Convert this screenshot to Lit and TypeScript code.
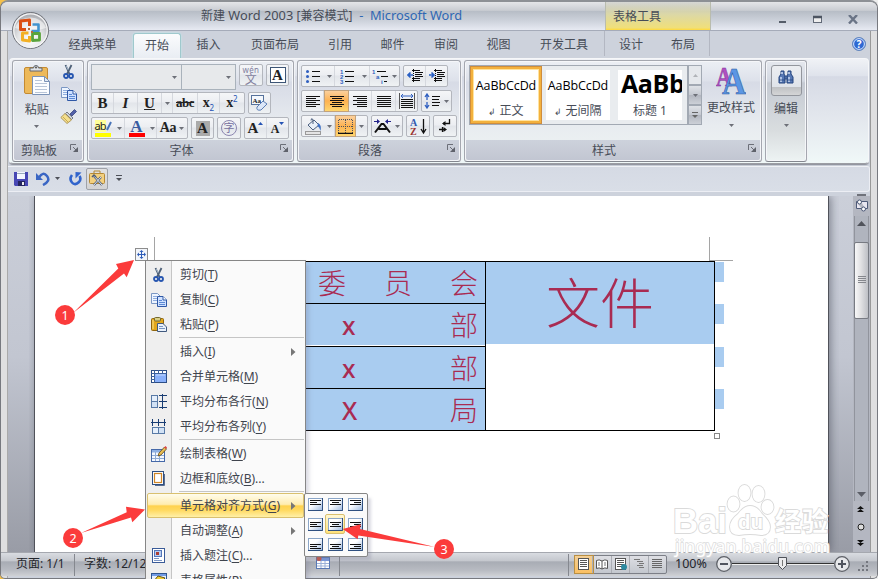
import { LitElement, html, svg, css, nothing } from "lit";
import { customElement } from "lit/decorators.js";
import { classMap } from "lit/directives/class-map.js";
import { styleMap } from "lit/directives/style-map.js";

const icon = (w: number, h: number, body: unknown) =>
  html`<svg width=${w} height=${h} viewBox="0 0 ${w} ${h}">${body}</svg>`;

/* Horizontal strokes: [x, y, length] */
const bars = (rows: number[][], fill = "#111") =>
  rows.map(([x, y, l]) => svg`<rect x=${x} y=${y} width=${l} height="1" fill=${fill}/>`);

const drop = html`<svg class="drop" width="5" height="3" viewBox="0 0 5 3"><path d="M0 0h5L2.500 3z" fill="#6d7078"/></svg>`;
const launcher = icon(9, 9, svg`<path d="M.5 6V.5H6" fill="none" stroke="#6c6f78"/><path d="M3 3l3 3" stroke="#6c6f78"/><path d="M8 3v5H3z" fill="#5f626b"/>`);

const scissors = icon(16, 16, svg`<path d="M4.500 1l4 9M10.500 1L6 10" stroke="#4e6077" stroke-width="1.800"/><path d="M5.200 2l2 4" stroke="#b8cbe0" stroke-width=".8"/><circle cx="5" cy="12" r="2" fill="none" stroke="#2756b0" stroke-width="1.800"/><circle cx="10" cy="12" r="2" fill="none" stroke="#2756b0" stroke-width="1.800"/>`);
const copy = icon(16, 14, svg`<path d="M.5.5h6l3 3v7h-9z" fill="#eef5ff" stroke="#7b97c4"/><path d="M2 3.500h4M2 5.500h5M2 7.500h5" stroke="#8fadde"/><path d="M6.500 3.500h5.500l3.500 3.500v6.500h-9z" fill="#cfe1ff" stroke="#2f58a6"/><path d="M12 3.500v3.500h3.500" fill="#fff" stroke="#2f58a6"/><path d="M8 7.500h3M8 9.500h6M8 11.500h6" stroke="#5d8ad4"/>`);
const pasteSmall = icon(16, 15, svg`<rect x=".5" y="1.500" width="12" height="12" rx="1" fill="#e3a81d" stroke="#90660e"/><path d="M2 3v9" stroke="#ffe58a"/><rect x="3.500" y=".5" width="6" height="3.500" rx="1" fill="#d9cf86" stroke="#756a30"/><path d="M6.500 6.500h5.500l3.500 3.500v4.500h-9z" fill="#e9f1fb" stroke="#40597e"/><path d="M8 9.500h4M8 11.500h6" stroke="#7795c2"/>`);
const pasteBig = icon(28, 32, svg`<rect x="1.500" y="3.500" width="23" height="26" rx="1.500" fill="#edb95a" stroke="#c48a32"/><path d="M7 7V4h3.500a2.500 2.500 0 0 1 5 0H19v3z" fill="#dfe2e6" stroke="#62676f"/><circle cx="13" cy="3.400" r="1" fill="#555"/><path d="M9.500 12.500h12l5 5v13h-17z" fill="#fbfdff" stroke="#7b93b7"/><path d="M21.500 12.500v5h5z" fill="#e1eaf5" stroke="#7b93b7"/><path d="M12 16.500h7M12 19.500h12M12 22.500h12M12 25.500h12M12 28.500h12" stroke="#b8c5d8"/>`);
const brush = icon(17, 16, svg`<path d="M10 6l4.500-4.500 2 2L12 8z" fill="#5160a8" stroke="#39437e" stroke-width=".8"/><path d="M7 4l6 6-1.500 1.500-6-6z" fill="#cdd2dc" stroke="#5e6370" stroke-width=".8"/><path d="M5 5.500l6.500 6.500-4.500 3.500L.8 9.500z" fill="#f4df8e" stroke="#a08544" stroke-width=".8"/><path d="M3 9l5 5" stroke="#c9a94f"/>`);

const mergeIco = icon(16, 13, svg`<rect x=".5" y=".5" width="15" height="12" fill="#fff" stroke="#2d4e86"/><path d="M.5 3.500h15M3.500.5v12M7.500 0v3.500M11.500 0v3.500M0 6.500h3.500M0 9.500h3.500" stroke="#3c609c"/><rect x="4" y="4" width="11" height="8" fill="#89b0fa"/><path d="M5 5h9" stroke="#c3d8ff"/>`);
const distRows = icon(16, 15, svg`<rect x=".5" y="1.500" width="6" height="6" fill="#e5effb" stroke="#587aa6"/><rect x=".5" y="7.500" width="6" height="6" fill="#d2e2f5" stroke="#587aa6"/><path d="M8 1.500h8M8 7.500h8M8 13.500h8M11.500 0v15" stroke="#193d73"/>`);
const distCols = icon(15, 16, svg`<path d="M0 3.500h15M1.500 0v7M7.500 0v7M13.500 0v7" stroke="#193d73"/><rect x="1.500" y="8.500" width="6" height="6" fill="#e5effb" stroke="#587aa6"/><rect x="7.500" y="8.500" width="6" height="6" fill="#d2e2f5" stroke="#587aa6"/>`);
const drawTable = icon(16, 16, svg`<rect x=".5" y="3.500" width="13" height="12" fill="#f4f8ff" stroke="#4468a8"/><rect x="1" y="4" width="12" height="2.500" fill="#8eb0e4"/><path d="M4.500 6v9M8.500 6v9M1 9.500h12M1 12.500h12" stroke="#8fabd5"/><path d="M7 10l1-3 5.500-6 2 2L10 9z" fill="#e9bd51" stroke="#5e471c" stroke-width=".8"/><path d="M13 1.500L14.500 0 16 1.500 15 3z" fill="#d44"/>`);
const borderPage = icon(14, 15, svg`<path d="M12.500 3v11.500H3" fill="none" stroke="#5a6e90"/><rect x=".5" y=".5" width="11" height="13" fill="#fff" stroke="#2d4f82"/><rect x="2.500" y="2.500" width="7" height="9" fill="#fff" stroke="#d08728" stroke-width="1.200"/>`);
const caption = icon(14, 15, svg`<rect x=".5" y=".5" width="12" height="14" fill="#fff" stroke="#3a5b98"/><rect x="2.500" y="2.500" width="7" height="6" fill="#b7cdf3" stroke="#5577b8"/><rect x="4" y="4" width="3" height="3" fill="#ab3d32"/><path d="M2 10.500h5M2 12.500h8" stroke="#7b94c4"/>`);
const tableProps = icon(16, 16, svg`<rect x=".5" y=".5" width="15" height="15" fill="#e8f0fd" stroke="#31568f"/><path d="M1 2h14" stroke="#719be6" stroke-width="2"/><path d="M2 9l5-6 7 2-5 6z" fill="#f2ce32" stroke="#5f5215"/>`);

interface MenuItem { label: string; key: string; tail?: string; ico?: unknown; sub?: boolean; hot?: boolean; sep?: boolean; }
const MENU: MenuItem[] = [
  { label: "剪切", key: "T", ico: scissors },
  { label: "复制", key: "C", ico: copy },
  { label: "粘贴", key: "P", ico: pasteSmall, sep: true },
  { label: "插入", key: "I", sub: true },
  { label: "合并单元格", key: "M", ico: mergeIco },
  { label: "平均分布各行", key: "N", ico: distRows },
  { label: "平均分布各列", key: "Y", ico: distCols, sep: true },
  { label: "绘制表格", key: "W", ico: drawTable },
  { label: "边框和底纹", key: "B", tail: "...", ico: borderPage, sep: true },
  { label: "单元格对齐方式", key: "G", sub: true, hot: true },
  { label: "自动调整", key: "A", sub: true },
  { label: "插入题注", key: "C", tail: "...", ico: caption },
  { label: "表格属性", key: "R", tail: "...", ico: tableProps },
];

@customElement("cell-menu")
export class CellMenu extends LitElement {
  static styles = css`
    :host { display: block; font: 12px "Noto Sans", "Noto Sans CJK SC", sans-serif; color: #3f444d; }
    .menu { box-sizing: border-box; width: 161px; height: 330px; border: 1px solid #868686; padding-top: 1px;
      background: linear-gradient(90deg, #efefef 25px, #c5c5c5 25px 26px, #fafafa 26px); box-shadow: 4px 3px 4px -1px #70709040; overflow: hidden; }
    .item { display: flex; align-items: center; height: 25px; margin: 0 1px; box-sizing: border-box; position: relative; }
    .ico { width: 23px; display: flex; justify-content: center; margin-right: 10px; }
    .lab { line-height: 24px; white-space: nowrap; flex: 1; }
    u { text-underline-offset: 2px; }
    .arr { margin-right: 8px; }
    .hot { border: 1px solid #d9c06f; border-radius: 2px; background: linear-gradient(#fffcec, #ffedb0 45%, #ffd24e 52%, #ffd960 70%, #fff0a8); margin-right: 1px; }
    .hot .ico { width: 22px; }
    .hot .arr { margin-right: 7px; }
    .sep { height: 1px; margin: 0 1px 1px 33px; background: #c5c5c5; }
  `;
  render() {
    return html`<div class="menu">${MENU.map(
      (m) => html`<div class=${classMap({ item: true, hot: !!m.hot })}>
          <span class="ico">${m.ico ?? nothing}</span>
          <span class="lab">${m.label}(<u>${m.key}</u>)${m.tail ?? ""}</span>
          ${m.sub ? html`<svg class="arr" width="5" height="8" viewBox="0 0 5 8"><path d="M0 0l4.500 4L0 8z" fill="#777"/></svg>` : nothing}
        </div>${m.sep ? html`<div class="sep"></div>` : nothing}`)}</div>`;
  }
}

@customElement("align-grid")
export class AlignGrid extends LitElement {
  static styles = css`
    :host { display: grid; box-sizing: border-box; width: 64px; height: 64px; border: 1px solid #868686; border-radius: 2px; background: #fafafa;
      grid-template: repeat(3, 20px) / repeat(3, 20px); padding: 0; box-shadow: 4px 4px 3px -1px #70709040; }
    .c { box-sizing: border-box; display: flex; align-items: flex-start; padding: 4px 0 0 3px; }
    .on { border: 1px solid #d9c06f; border-radius: 2px; background: linear-gradient(#fff8d6, #ffe27a); padding: 3px 0 0 2px; }
    svg { display: block; }
  `;
  render() {
    const cells = [];
    for (let r = 0; r < 3; r++)
      for (let c = 0; c < 3; c++) {
        const y = 2 + r * 2;
        const at = (l: number) => (c === 0 ? 2 : c === 1 ? 7.5 - l / 2 : 13 - l);
        cells.push(html`<div class=${classMap({ c: true, on: r === 1 && c === 1 })}>${icon(15, 13, svg`
          <defs><linearGradient id="g" x1="0" y1="0" x2="1" y2="1"><stop offset=".4" stop-color="#fff"/><stop offset="1" stop-color="#9db9df"/></linearGradient></defs>
          <rect x=".5" y=".5" width="14" height="12" fill="url(#g)" stroke="#8ba6c8"/><path d="M0 12.500h14.500V0" fill="none" stroke="#2f5080"/>
          ${bars([[at(11), y, 11], [at(7), y + 2, 7], [at(11), y + 4, 11]].map(([a, b, l]) => [Math.round(a), b, l]))}`)}</div>`);
      }
    return html`${cells}`;
  }
}

@customElement("ribbon-bar")
export class RibbonBar extends LitElement {
  static styles = css`
    :host { display: block; height: 106px; box-sizing: border-box; margin: 0 1px; border: 1px solid #f6f7f9; border-bottom-color: #9b9da4; border-radius: 4px;
      background: linear-gradient(#f0f2f6, #dfe3ec 16%, #d6dae5 17%, #e4e8ee 60%, #f0f8f8); box-shadow: 0 1px 1px #8d9099;
      font: 12px "Noto Sans", "Noto Sans CJK SC", sans-serif; color: #474c57; padding: 1px 0 0 2px; }
    svg { flex: none; }
    .row0 { display: flex; gap: 3px; }
    .g { box-sizing: border-box; height: 102px; border: 1px solid #a4a7af; border-bottom-color: #83868e; border-radius: 3px; box-shadow: inset 0 0 0 1px #f5f6f9, 1px 0 #f2f3f6;
      background: linear-gradient(#eceff4, #dde1ea 20%, #d7dbe6 21%, #e8ecf0 65%, #eef4f3); display: flex; flex-direction: column; }
    .body { flex: 1; padding: 3px 3px 0; display: flex; flex-direction: column; gap: 3px; }
    .para .body { padding-top: 4px; }
    .foot { height: 20px; margin: 0 1px 1px; display: flex; align-items: center; background: linear-gradient(#cdd2dc, #c2c6d2); border-radius: 0 0 2px 2px; }
    .foot b { font-weight: 400; flex: 1; text-align: center; line-height: 20px; margin-top: 2px; padding-right: 18px; }
    .foot svg { margin: -4px 3px 0 -12px; }
    .clip { width: 72px; } .font { width: 207px; } .para { width: 164px; } .style { width: 298px; } .edit { width: 42px; }
    .line { display: flex; gap: 3px; height: 22px; }
    .top { height: 25px; }
    .seg { display: flex; box-sizing: border-box; border: 1px solid #b3b6bd; border-radius: 2px; background: linear-gradient(#f5f6f8, #eceef2 45%, #e2e5ea 50%, #eff2f4); height: 22px; }
    .seg > span { display: flex; align-items: center; justify-content: center; border-right: 1px solid #d5d8de; box-sizing: border-box; }
    .seg > span:last-child { border-right: 0; }
    .seg .nb { border-right: 0; }
    .seg .on { background: linear-gradient(#fbd09d, #fdb251 50%, #ffd66e); margin: -1px 0; border: 1px solid #c2a27c; }
    .combo { box-sizing: border-box; height: 26px; border: 1px solid #a9b2bb; background: #e7e9eb; display: flex; align-items: center; justify-content: flex-end; padding-right: 4px; }
    .combo + .combo { margin-left: -3px; border-left: 0; }
    .c1 { width: 91px; } .c2 { width: 54px; }
    .serif { font-family: "Liberation Serif", serif; font-weight: 700; font-size: 15px; color: #222; line-height: 20px; }
    .u { text-decoration: underline; } .i { font-style: italic; } .s { text-decoration: line-through; font-size: 13px; letter-spacing: -.5px; }
    .aa { font-size: 14px; letter-spacing: -.3px; } .sup { font-size: 8px; color: #2453b4; margin: -9px 0 0 0; } .sub { font-size: 8px; color: #2453b4; margin: 9px 0 0 0; }
    .sa { font-size: 12px; margin-top: 2px; }
    .frame { border: 1px solid #3d5576; width: 14px; height: 14px; line-height: 14px; text-align: center; background: #fff; }
    .shade { background: #aaa; width: 14px; height: 15px; line-height: 15px; text-align: center; }
    .ring { box-sizing: border-box; border: 1px solid #8c86b0; border-radius: 50%; width: 16px; height: 16px; line-height: 14px; font-size: 11px; color: #766fa0; text-align: center; }
    .wen { flex-direction: column; font-size: 8px; line-height: 7px; color: #81809e; letter-spacing: .4px; } .wen i { font: 12px/11px "Noto Sans CJK SC"; }
    .ul { display: flex; flex-direction: column; align-items: center; } .bar { height: 4px; width: 16px; }
    .yellow { background: #ff0; } .red { background: #f00; }
    .ab { font: 11px/12px "Noto Sans", sans-serif; color: #222; background: #ff9; align-self: flex-start; letter-spacing: -1px; padding-right: 1px; }
    .hl { display: flex; align-items: flex-start; height: 13px; width: 17px; }
    .fc { font-size: 17px; line-height: 14px; color: #3a5ca0; height: 13px; }
    .clipin { display: flex; flex: 1; padding: 3px 3px 0; }
    .big { width: 42px; display: flex; flex-direction: column; align-items: center; }
    .big b, .col b { font-weight: 400; line-height: 16px; white-space: nowrap; }
    .big b { margin-top: 6px; }
    .big .drop { margin-top: 7px; }
    .tools { display: flex; flex-direction: column; align-items: center; gap: 7px; width: 23px; }
    .stin { display: flex; flex: 1; padding: 4px 0 0 4px; }
    .gal { display: flex; width: 219px; height: 60px; box-sizing: border-box; border: 1px solid #a2a9b3; background: #e9ecef; }
    .sty { width: 64px; height: 50px; margin: 4px 4px; background: #fff; display: flex; flex-direction: column; align-items: center; overflow: hidden; }
    .sty em { font: 12.500px/31px "Open Sans", sans-serif; color: #000; letter-spacing: -.1px; white-space: nowrap; }
    .sty .h { font: 700 25px/27px "Open Sans", sans-serif; height: 31px; letter-spacing: -.4px; align-self: flex-start; margin-left: 3px; }
    .sty p { margin: 0; line-height: 19px; white-space: nowrap; }
    .sty small { font-size: 9px; }
    .sel { box-shadow: 0 0 0 1px #ffe3a0, 0 0 0 3px #f3b13d, 0 0 0 4px #cf8d3c; }
    .spin { display: flex; flex-direction: column; width: 14px; height: 60px; }
    .spin span { flex: 1; border: 1px solid #a2a9b3; box-sizing: border-box; display: flex; align-items: center; justify-content: center; background: linear-gradient(#dfe2e7, #c4c8d0 50%, #b2b6bf 51%, #ccd0d7); }
    .spin .off { background: #e5e8ec; }
    .col { display: flex; flex-direction: column; align-items: center; width: 58px; }
    .col svg { margin-top: 1px; } .col .drop { margin-top: 8px; } .col b { margin-top: 5px; }
    .edit { align-items: center; background: linear-gradient(#e5e8ee, #d3d8e2 20%, #c5cad3 22%, #d9dddf 70%, #edf3f3); }
    .ebtn { margin-top: 4px; width: 31px; height: 31px; box-sizing: border-box; border: 1px solid #93969d; border-radius: 3px; display: flex; justify-content: center; padding-top: 4px; background: linear-gradient(#eceef1, #dfe3ea 72%, #bfc1c4 73%, #d4d5d6); }
    .edit b { font-weight: 400; line-height: 16px; margin-top: 5px; } .edit .drop { margin-top: 7px; }
  `;

  private cell(w: number, body: unknown, cls = "") {
    return html`<span class=${cls} style=${styleMap({ width: `${w}px` })}>${body}</span>`;
  }

  private clipboard() {
    return html`<div class="g clip"><div class="clipin">
        <div class="big">${pasteBig}<b>粘贴</b>${drop}</div>
        <div class="tools">${scissors}${copy}${brush}</div>
      </div><div class="foot"><b>剪贴板</b>${launcher}</div></div>`;
  }

  private font() {
    const c = this.cell;
    return html`<div class="g font"><div class="body">
      <div class="line top">
        <div class="combo c1">${drop}</div><div class="combo c2">${drop}</div>
        <div class="seg">${c(22, html`wén<i>文</i>`, "wen")}</div>
        <div class="seg">${c(21, html`<div class="serif frame">A</div>`)}</div>
      </div>
      <div class="line">
        <div class="seg">
          ${c(22, html`<span class="serif">B</span>`)}${c(24, html`<span class="serif i">I</span>`)}
          ${c(24, html`<span class="serif u">U</span>`)}${c(11, drop)}
          ${c(25, html`<span class="serif s">abc</span>`)}
          ${c(22, html`<span class="serif aa">x</span><span class="sub">2</span>`)}${c(24, html`<span class="serif aa">x</span><span class="sup">2</span>`)}
        </div>
        <div class="seg">${c(21, icon(18, 17, svg`<rect x=".5" y=".5" width="12" height="9" fill="#f4f8fd" stroke="#56729c"/><text x="1.500" y="7.500" font-size="7" font-weight="700" font-family="Liberation Serif" fill="#222">Aa</text><path d="M6 12l6-6 4 3-6 6q-5 1-4-3z" fill="#dce7f8" stroke="#5c7eb4"/>`))}</div>
      </div>
      <div class="line">
        <div class="seg">
          ${c(22, html`<div class="ul"><div class="hl"><span class="ab">ab</span><svg width="6" height="12" viewBox="0 0 6 12"><path d="M1 10l4-8" stroke="#4773b8" stroke-width="2"/></svg></div><div class="bar yellow"></div></div>`, "nb")}${c(11, drop)}
          ${c(23, html`<div class="ul"><span class="serif fc">A</span><div class="bar red"></div></div>`, "nb")}${c(9, drop)}
          ${c(30, html`<span class="serif aa">Aa</span>&nbsp;${drop}`)}
        </div>
        <div class="seg">${c(21, html`<div class="serif shade">A</div>`)}</div>
        <div class="seg">${c(22, html`<div class="ring">字</div>`)}</div>
        <div class="seg">
          ${c(22, html`<span class="serif">A</span><svg width="5" height="12" viewBox="0 0 5 12"><path d="M0 3h5L2.500 0z" fill="#2453b4"/></svg>`)}
          ${c(21, html`<span class="serif sa">A</span><svg width="5" height="12" viewBox="0 0 5 12"><path d="M0 0h5L2.500 3z" fill="#2453b4"/></svg>`)}
        </div>
      </div>
    </div><div class="foot"><b>字体</b>${launcher}</div></div>`;
  }

  private paragraph() {
    const c = this.cell;
    const blue = "#2f5fc0";
    const al = (mode: number) =>
      icon(14, 13, bars([14, 10, 14, 10, 14, 10].map((l, i) => [mode === 3 ? 0 : mode === 0 ? 0 : mode === 1 ? (14 - l) / 2 : 14 - l, i * 2 + 1, mode === 3 ? 14 : l])));
    const indent = (d: string) => icon(16, 14, svg`${bars([[5, 1, 8], [8, 3, 8], [8, 5, 7], [8, 7, 8], [5, 9, 8], [5, 11, 8]])}<path d="M6.500 0v14" stroke="#111" stroke-dasharray="1 1"/><path d=${d} fill="none" stroke="#2a60c4" stroke-width="1.600"/>`);
    return html`<div class="g para"><div class="body">
      <div class="line">
        <div class="seg">
          ${c(22, icon(14, 13, svg`<circle cx="1.500" cy="1.500" r="1.500" fill=${blue}/><circle cx="1.500" cy="6.500" r="1.500" fill=${blue}/><circle cx="1.500" cy="11.500" r="1.500" fill=${blue}/>${bars([[6, 1, 8], [6, 6, 8], [6, 11, 8]])}`), "nb")}${c(11, drop)}
          ${c(24, icon(14, 15, svg`<g font-family="Liberation Sans" font-size="6" font-weight="700" fill=${blue}><text x="0" y="4.500">1</text><text x="0" y="9.500">2</text><text x="0" y="14.500">3</text></g>${bars([[5, 2, 9], [5, 7, 9], [5, 12, 9]])}`), "nb")}${c(11, drop)}
          ${c(19, icon(16, 15, svg`<g font-family="Liberation Sans" font-size="6" font-weight="700" fill=${blue}><text x="0" y="4.500">1</text><text x="4" y="9.500">a</text><text x="9" y="14.500">i</text></g>${bars([[5, 2, 9], [9, 7, 7], [12, 12, 3]])}`), "nb")}${c(10, drop)}
        </div>
        <div class="seg">${c(22, indent("M6 6H1M3.500 3.500L1 6l2.500 2.500"))}${c(21, indent("M0 6h5M2.500 3.500L5 6 2.500 8.500"))}</div>
      </div>
      <div class="line">
        <div class="seg">${c(22, al(0))}${c(25, al(1), "on")}${c(23, al(2))}${c(24, al(3))}${c(21, icon(16, 16, svg`<path d="M.5 0v16M15.500 0v16" stroke="#555"/><path d="M2 3h12M4 1L2 3l2 2M12 1l2 2-2 2" fill="none" stroke=${blue}/>${bars([[2, 6, 12], [2, 8, 12], [2, 10, 12], [2, 12, 12], [2, 14, 12]])}`))}</div>
        <div class="seg">${c(20, icon(16, 16, svg`<path d="M3 1v6M1 4l2-3 2 3M3 9v6M1 12l2 3 2-3" fill="none" stroke=${blue} stroke-width="1.300"/>${bars([[8, 3, 8], [8, 6, 7], [8, 9, 8], [8, 12, 7]])}`), "nb")}${c(9, drop)}</div>
      </div>
      <div class="line">
        <div class="seg">${c(22, icon(17, 17, svg`<path d="M3 7l6-5 5 5-6 5z" fill="#e9f0f8" stroke="#4b5f7e"/><path d="M8 6V1.500q-2-2-2 1" fill="none" stroke="#4b5f7e"/><path d="M13 5q4 2 2.500 8-1-4-3-5z" fill="#3d70c4"/><rect x=".5" y="13.500" width="15" height="3" fill="#e4e4e4" stroke="#999"/>`), "nb")}${c(11, drop)}${c(21, icon(15, 15, svg`<path d="M1 .5h13M1 7.500h13M.5 1v13M7.500 1v13M14.500 1v13" stroke="#4c525e" stroke-dasharray="1 1"/><path d="M0 14.500h15" stroke="#111" stroke-width="1.500"/>`), "on")}${c(11, drop)}</div>
        <div class="seg">${c(21, icon(17, 15, svg`<path d="M1 13.500L7.500 5h2L16 13.500M4.500 10h8" fill="none" stroke="#111" stroke-width="2"/><path d="M0 2.500h5M12 2.500h5" stroke="#23238a"/><path d="M3 0l3 2.500L3 5zM14 0l-3 2.500L14 5z" fill="#23238a"/>`), "nb")}${c(9, drop)}</div>
        <div class="seg">${c(22, icon(17, 17, svg`<g font-family="Liberation Serif" font-weight="700" font-size="10"><text x="0" y="7.500" fill="#3059b0">A</text><text x="0" y="16.500" fill="#9a3232">Z</text></g><path d="M13.500 1v13M11 11l2.500 4 2.500-4" fill="none" stroke="#111" stroke-width="1.300"/>`))}</div>
        <div class="seg">${c(22, icon(14, 14, svg`<path d="M11.500 0v4.500H5M1 10.500h5M4.500 8v5" fill="none" stroke="#111" stroke-width="1.300"/><path d="M4 4.500L7.500 2v5zM9 10.500L5.500 8v5z" fill="#111"/>`))}</div>
      </div>
    </div><div class="foot"><b>段落</b>${launcher}</div></div>`;
  }

  private styleGroup() {
    return html`<div class="g style"><div class="stin">
      <div class="gal">
        <div class="sty sel"><em>AaBbCcDd</em><p><small>↲</small> 正文</p></div>
        <div class="sty"><em>AaBbCcDd</em><p><small>↲</small> 无间隔</p></div>
        <div class="sty"><em class="h">AaBb</em><p>标题 1</p></div>
      </div>
      <div class="spin">
        <span class="off"><svg width="5" height="3" viewBox="0 0 5 3"><path d="M0 3h5L2.500 0z" fill="#b0b3b8"/></svg></span>
        <span>${drop}</span>
        <span><svg width="6" height="7" viewBox="0 0 6 7"><path d="M0 .5h6" stroke="#666"/><path d="M0 3h6L3 6z" fill="#666"/></svg></span>
      </div>
      <div class="col">${icon(30, 29, svg`<g font-family="Liberation Serif" font-weight="700"><text x="0" y="20" font-size="28" textLength="16" lengthAdjust="spacingAndGlyphs" fill="#b04fc0" stroke="#7b3296" stroke-width=".5">A</text><text x="6" y="28" font-size="37" textLength="24" lengthAdjust="spacingAndGlyphs" fill="#5b96e4" stroke="#2c569f" stroke-width=".6">A</text></g>`)}<b>更改样式</b>${drop}</div>
    </div><div class="foot"><b>样式</b>${launcher}</div></div>`;
  }

  render() {
    return html`<div class="row0">${this.clipboard()}${this.font()}${this.paragraph()}${this.styleGroup()}
      <div class="g edit"><div class="ebtn">${icon(16, 16, svg`<path d="M3 1h3v3l1 2v7H1V7l2-3zM10 1h3v3l2 3v6H9V6l1-2z" fill="#5778b4" stroke="#24447e"/><path d="M3 7v5M11 7v5M4 2v2M11 2v2" stroke="#d7e4fa" stroke-width="1.400"/><path d="M7 6h2v3H7zM1 10h6M9 10h6" fill="#6585bf" stroke="#24447e" stroke-width=".8"/>`)}</div><b>编辑</b>${drop}</div>
    </div>`;
  }
}

const TABS: [string, number, string][] = [
  ["经典菜单", 81, ""], ["开始", 48, "act"], ["插入", 55, ""], ["页面布局", 78, ""], ["引用", 52, ""], ["邮件", 53, ""],
  ["审阅", 54, ""], ["视图", 51, ""], ["开发工具", 80, ""], ["设计", 53, "ctx l"], ["布局", 53, "ctx r"],
];

@customElement("app-root")
export class AppRoot extends LitElement {
  static styles = css`
    :host { display: block; width: 878px; height: 579px; overflow: hidden; position: relative; font: 12px "Noto Sans", "Noto Sans CJK SC", sans-serif; color: #474c57; background: linear-gradient(90deg, #f5c04a 20px, #eee 20px); }
    * { box-sizing: border-box; }
    svg { display: block; flex: none; }
    .win { height: 579px; display: flex; flex-direction: column; border: 1px solid #77797f; border-top: 2px solid #8d9095; border-radius: 8px 8px 5px 5px; background: #dfdfe0; overflow: hidden; }
    .title { height: 29px; display: flex; background: linear-gradient(#e4e5e8, #c9ccd2 30%, #b7bdc6 33%, #cfd4dd 70%, #e7eaf2); border-bottom: 1px solid #a5abb9; }
    .cap { width: 604px; padding: 4px 0 0 200px; font-size: 12.800px; line-height: 19px; white-space: nowrap; }
    .cap .zh { font-size: 12px; }
    .cap .d { color: #2f67b3; }
    .ctxt { width: 106px; padding: 5px 0 0 7px; line-height: 19px; background: linear-gradient(#c9c9c380, #dcd8a6 45%, #f0df7a 92%, #ffd93b); border: solid #b9bcae; border-width: 0 1px; }
    .wb { flex: 1; display: flex; padding: 13px 19px 0 0; justify-content: flex-end; gap: 26px; }
    .mid { flex: 1; display: flex; flex-direction: column; margin: 0 7px; background: #cdd2dc; min-height: 0; box-shadow: -1px 0 #aaa, 1px 0 #999; }
    .tabs { height: 27px; display: flex; padding: 2px 4px 0 44px; background: #cdd2dc; }
    .tab { text-align: center; line-height: 24px; height: 25px; }
    .act { background: linear-gradient(#fbfcfd, #e9edf3); border: 1px solid #9fc9cd; border-bottom: 0; border-radius: 3px 3px 0 0; line-height: 23px; box-shadow: 0 0 2px #b9f3f4; }
    .ctx { margin-top: -2px; padding-top: 2px; }
    .l { border-left: 1px solid #b3b7c2; } .r { border-right: 1px solid #b3b7c2; }
    .help { margin: 4px 0 0 auto; }
    .qat { height: 26px; margin: 2px 0 0; display: flex; align-items: center; padding: 0 0 1px 6px; border-top: 1px solid #eff1f5; border-bottom: 1px solid #eceef4; border-right: 1px solid #eceef4; border-radius: 0 3px 3px 0; background: linear-gradient(#d5dae4, #d9dee7); }
    .undo { margin-left: 8px; } .ud { margin: 0 9px 0 5px; }
    .tool { width: 22px; height: 22px; border: 1px solid #9ea1a8; border-radius: 2px; background: linear-gradient(#e1e1e2, #d3d3d4); display: flex; align-items: center; justify-content: center; margin: 0 8px 0 4px; }
    .doc { height: 356px; margin-top: 4px; display: flex; background: linear-gradient(#cbcfd9, #c2c6d1 45%, #999ca6); }
    .page { margin-left: 26px; width: 795px; height: 356px; background: #fff; border: solid #50525a; border-width: 0 1px; position: relative; padding: 65px 0 0 119px; box-shadow: 2px 0 8px #50536099; clip-path: inset(0 -10px 0 -5px); }
    .table { display: flex; width: 561px; height: 170px; border: 1px solid #000; color: #a92b52; font: 300 28px "Noto Sans CJK SC", sans-serif; }
    .left { width: 331px; border-right: 1px solid #000; background: #a9ccf0; }
    .r4 { display: flex; height: 42px; border-bottom: 1px solid #000; padding: 0 7px 0 163px; justify-content: space-between; line-height: 40px; }
    .r4:nth-child(2) { height: 43px; box-shadow: inset 0 -1px #fff; } .r4:last-child { border: 0; }
    .r4.x { padding-left: 187px; } .r4 i { font: 500 25px/42px "Noto Sans", sans-serif; }
    .right { flex: 1; height: 82px; background: #a9ccf0; font-size: 54px; line-height: 78px; text-align: center; }
    .end { position: absolute; left: 680px; width: 9px; height: 20px; background: #a9ccf0; }
    .mk1 { position: absolute; left: 119px; top: 41px; height: 24px; width: 1px; background: #a5a5a5; }
    .mk2 { position: absolute; left: 674px; top: 41px; width: 24px; height: 24px; border: solid #a5a5a5; border-width: 0 0 1px 1px; }
    .mv { position: absolute; left: 100px; top: 52px; width: 13px; height: 13px; border: 1px solid #8d8d8d; background: #f2f5fa; padding: 1px; }
    .rs { position: absolute; left: 679px; top: 237px; width: 6px; height: 6px; border: 1px solid #888; }
    .sb { margin-left: 24px; width: 17px; display: flex; flex-direction: column; align-items: center; background: #b4b7c1; }
    .split { height: 2px; width: 9px; background: #6f727b; margin: -2px 0 3px; }
    .browse { height: 17px; }
    .track { width: 15px; height: 286px; border: solid #91949d; border-width: 0 1px; background: #b0b4be; display: flex; flex-direction: column; align-items: center; }
    .up { margin-top: 5px; } .down { margin: auto 0 4px; }
    .thumb { margin: 16px -1px 0; width: 15px; height: 77px; border: 1px solid #777a82; border-radius: 2px; background: linear-gradient(90deg, #f7f7f8, #e1e1e3 45%, #bdbfc5); display: flex; align-items: center; justify-content: center; }
    .nav { height: 51px; width: 17px; margin-left: -2px; display: flex; flex-direction: column; align-items: center; justify-content: space-around; }
    .status { height: 24px; display: flex; align-items: center; margin: 0 -7px; padding: 0 7px; border-top: 1px solid #a5a8af; background: linear-gradient(#d9dce1, #c4c7cd 35%, #a8acb4 38%, #b8bbc2 75%, #cfd1d5); color: #24262c; line-height: 20px; }
    .status span { border-right: 1px solid #85888f; height: 22px; }
    .p { width: 67px; padding-left: 8px; } .w { width: 231px; padding-left: 9px; } .m { width: 34px; padding: 2px 0 0 10px; } .f { width: 229px; }
    .views { display: flex; width: 93px; height: 19px; margin: -1px 0 0 5px; border: 1px solid #7c7f87; background: linear-gradient(#dedfe4, #c3c7ce); border-radius: 2px; }
    .views i { flex: 1; display: flex; align-items: center; justify-content: center; border-right: 1px solid #aaadb4; }
    .views .on { background: linear-gradient(#f3cf96, #fbc062); outline: 1px solid #b98f43; }
    .views .last { border: 0; }
    .pct { margin: -2px 0 0 8px; width: 33px; font-size: 12.500px; white-space: nowrap; }
    .slide { margin: -1px 0 0 8px; } .grip { margin: 4px 0 0 8px; }
    .orb { position: absolute; left: 11px; top: 11px; }
    cell-menu { position: absolute; left: 145px; top: 260px; }
    align-grid { position: absolute; left: 304px; top: 493px; }
    .over { position: absolute; left: 0; top: 0; }
  `;

  private title() {
    return html`<div class="title">
      <div class="cap"><span class="zh">新建</span> Word 2003 <span class="zh">[兼容模式]</span> <span class="d">&nbsp;- &nbsp;Microsoft Word</span></div>
      <div class="ctxt">表格工具</div>
      <div class="wb">${icon(8, 8, svg`<rect y="6" width="7" height="2" fill="#555d69"/>`)}${icon(9, 8, svg`<rect x=".5" y="1.500" width="8" height="6" fill="#eee" stroke="#626a78"/><path d="M0 2h9" stroke="#4d5562" stroke-width="2.500"/>`)}${icon(10, 9, svg`<path d="M1 0l8 8.500M9 0L1 8.500" stroke="#6a7486" stroke-width="2.400"/>`)}</div>
    </div>`;
  }

  private qat() {
    return html`<div class="qat">
      ${icon(14, 14, svg`<path d="M0 0h14v14H1L0 13z" fill="#4747b4"/><rect x="3" y="0" width="8" height="7" fill="#f3f6ff"/><path d="M3 1.500h8" stroke="#9ab"/><rect x="4" y="9" width="7" height="5" fill="#24245f"/><rect x="8" y="10" width="2" height="3" fill="#eee"/>`)}
      <svg class="undo" width="14" height="14" viewBox="0 0 14 14"><path d="M3 5.500Q7-1 11 4t-4 9" fill="none" stroke="#3a66c4" stroke-width="2.500"/><path d="M0 1v7h7z" fill="#3a66c4"/></svg>
      <svg class="ud" width="5" height="3" viewBox="0 0 5 3"><path d="M0 0h5L2.500 3z" fill="#4d5058"/></svg>
      ${icon(13, 14, svg`<path d="M3 3Q0 7 3 10.500T10 10Q12.500 7 10.500 4" fill="none" stroke="#3164cc" stroke-width="2.600"/><path d="M6.500 0v6.500l6-6z" fill="#3164cc"/>`)}
      <div class="tool">${icon(18, 17, svg`<rect x="1.500" y="3.500" width="15" height="10" rx="1" fill="#f3d07f" stroke="#b58935"/><path d="M6 3V1h6v2" fill="none" stroke="#b58935"/><path d="M6 6l8 9M13 7l-7 8" stroke="#4f5d77" stroke-width="2.200"/><path d="M6 6l8 9M13 7l-7 8" stroke="#dfe6ef" stroke-width="1"/><path d="M4 7l2-2 2 2" fill="none" stroke="#4f5d77" stroke-width="1.500"/>`)}</div>
      ${icon(6, 7, svg`<path d="M0 .5h6" stroke="#4d5058"/><path d="M0 3h6L3 6z" fill="#4d5058"/>`)}
    </div>`;
  }

  private document() {
    return html`<div class="doc">
      <div class="page">
        <div class="table">
          <div class="left">
            <div class="r4"><span>委</span><span>员</span><span>会</span></div>
            <div class="r4 x"><i>x</i>部</div><div class="r4 x"><i>x</i>部</div><div class="r4 x"><i>X</i>局</div>
          </div>
          <div class="right">文件</div>
        </div>
        ${[66, 108, 151, 193].map((y) => html`<div class="end" style=${styleMap({ top: `${y}px` })}></div>`)}
        <div class="mk1"></div><div class="mk2"></div><div class="rs"></div>
        <div class="mv">${icon(9, 9, svg`<path d="M4.500 1v7M1 4.500h7" stroke="#2d5cb8"/><path d="M4.500 0l2 2h-4zM4.500 9l2-2h-4zM0 4.500l2-2v4zM9 4.500l-2-2v4z" fill="#2d5cb8"/>`)}</div>
      </div>
      <div class="sb"><div class="split"></div>
        <div class="browse">${icon(12, 13, svg`<path d="M.5 2.500h3M5 2.500h6.500v7H9M.5 2.500v7h5" fill="#e8e6f0" stroke="#4e5a78"/><circle cx="3.500" cy="3" r="2" fill="#fff" stroke="#4e5a78"/><circle cx="7.500" cy="10" r="2" fill="#fff" stroke="#4e5a78"/>`)}</div>
        <div class="track"><svg class="up" width="9" height="5" viewBox="0 0 9 5"><path d="M0 5h9L4.500 0z" fill="#50535b"/></svg>
          <div class="thumb">${icon(8, 8, bars([[0, 0, 8], [0, 2, 8], [0, 4, 8], [0, 6, 8]], "#85878d"))}</div>
          <svg class="down" width="9" height="5" viewBox="0 0 9 5"><path d="M0 0h9L4.500 5z" fill="#5b5e67"/></svg></div>
        <div class="nav">${icon(7, 7, svg`<path d="M0 3h7L3.500 0zM0 6h7L3.500 3z" fill="#111"/>`)}${icon(8, 8, svg`<circle cx="4" cy="4" r="3" fill="#ddd" stroke="#222"/>`)}${icon(7, 7, svg`<path d="M0 0h7L3.500 3zM0 3h7L3.500 6z" fill="#111"/>`)}</div>
      </div>
    </div>`;
  }

  private status() {
    const doc = svg`<rect x=".5" y=".5" width="10" height="11" fill="#fff" stroke="#555"/>${bars([[2, 2, 7], [2, 4, 7], [2, 6, 7], [2, 8, 7]], "#555")}`;
    return html`<div class="status">
      <span class="p">页面: 1/1</span><span class="w">字数: 12/12</span>
      <span class="m">${icon(15, 13, svg`<rect x=".5" y="1.500" width="13" height="11" fill="#fff" stroke="#5878b4"/><rect x="1" y="2" width="12" height="3" fill="#7a9be0"/><path d="M1 7.500h12M1 10h12M5 5v7M9 5v7" stroke="#9bb0d8"/><circle cx="3" cy="2.500" r="2.500" fill="#c95a48"/>`)}</span><span class="f"></span>
      <div class="views"><i class="on">${icon(11, 12, doc)}</i><i>${icon(12, 11, svg`<path d="M6 2Q3 0 .5 1.500v8Q3 8 6 10q3-2 5.500-.5v-8Q9 0 6 2v8" fill="#fff" stroke="#555"/><path d="M2 4h2M2 6h2M8 4h2M8 6h2" stroke="#777"/>`)}</i><i>${icon(12, 12, svg`${doc}<circle cx="9" cy="9" r="3" fill="#2f8aa0"/>`)}</i><i>${icon(10, 10, bars([[0, 0, 6], [3, 2, 6], [5, 4, 5], [3, 6, 6], [5, 8, 5]], "#777"))}</i><i class="last">${icon(10, 10, bars([[0, 0, 10], [0, 2, 10], [0, 4, 10], [0, 6, 10], [0, 8, 10]], "#666"))}</i></div>
      <div class="pct">100%</div>
      <svg class="slide" width="134" height="18" viewBox="0 0 134 18"><path d="M16 8.500h102" stroke="#333"/><path d="M16 9.500h102" stroke="#eee"/>
        ${[8, 126].map((x) => svg`<circle cx=${x} cy="9" r="7.300" fill="#e6e7ea" stroke="#5d6067" stroke-width="1.300"/><path d="M${x - 4} 9h8" stroke="#50545e" stroke-width="2"/>`)}<path d="M126 5v8" stroke="#50545e" stroke-width="2"/>
        <path d="M62.500 2.500h8v8l-4 4-4-4z" fill="#ececee" stroke="#50535a"/><path d="M66.500 5v6" stroke="#777"/></svg>
      <svg class="grip" width="11" height="11" viewBox="0 0 11 11">${[[8, 0], [4, 4], [8, 4], [0, 8], [4, 8], [8, 8]].map(([x, y]) => svg`<rect x=${x} y=${y} width="2" height="2" fill="#74777f"/>`)}</svg>
    </div>`;
  }

  private orb() {
    return html`<svg class="orb" width="40" height="40" viewBox="0 0 40 40"><defs>
      <radialGradient id="o" cx=".5" cy=".75" r=".7"><stop offset="0" stop-color="#fff"/><stop offset=".5" stop-color="#e3e4e6"/><stop offset="1" stop-color="#a9abb0"/></radialGradient></defs>
      <circle cx="19.500" cy="19.500" r="18" fill="url(#o)" stroke="#70737a"/><circle cx="19.500" cy="19.500" r="16.700" fill="none" stroke="#f5f5f6" stroke-width="1.200"/>
      <path d="M4 17a16 14 0 0 1 31 0q-15 5-31 0z" fill="#fff" opacity=".55"/>
      <g fill="none" stroke-linejoin="round"><path d="M15 18.500H9.500V10l9-1v6" stroke="#dc4f14" stroke-width="3"/>
      <path d="M21.500 13.500h6v6.500h-7" stroke="#4294cf" stroke-width="2.600"/><path d="M17.500 22h-6v7l7 1v-5" stroke="#f3b024" stroke-width="3"/><path d="M21.500 22.500h7v6.500l-7 .5z" stroke="#5aa43c" stroke-width="2.800"/></g>
      <path d="M17 17h2v2h-2zM20 20h2v2h-2z" fill="#b86a3a"/></svg>`;
  }

  private overlay() {
    const pin = (x: number, y: number, n: string, pts: string) => svg`<polygon points=${pts} fill="#fb3b3b"/><circle cx=${x} cy=${y} r="10" fill="#fb3b3b"/><text x=${x} y=${y + 4.5} font-size="12.500" text-anchor="middle" fill="#fff">${n}</text>`;
    return html`<svg class="over" width="878" height="579" viewBox="0 0 878 579">
      <g fill="#fff" stroke="#dadada" stroke-width="1.800" paint-order="stroke" font-family="Liberation Sans" font-weight="700">
        <text x="673" y="533" font-size="35" textLength="54" lengthAdjust="spacingAndGlyphs">Bai</text>
        <ellipse cx="733.500" cy="504" rx="6" ry="7.500"/><ellipse cx="744.500" cy="493" rx="6" ry="8"/><ellipse cx="758.500" cy="494" rx="6" ry="8"/><ellipse cx="767.500" cy="507" rx="6" ry="7"/>
        <path d="M750 506q7 0 12 8 8 7 8 13 0 8-9 8-11-2-22 0-9 0-9-8 0-7 8-13 6-8 12-8z"/>
        <text x="738" y="529" font-size="21" textLength="25" lengthAdjust="spacingAndGlyphs">du</text>
        <text x="775" y="531" font-size="26" font-family="Noto Sans CJK SC" textLength="53">经验</text>
      </g>
      <text x="675" y="553" font-size="17.500" fill="#fff" stroke="#dcdcdc" stroke-width="1.500" paint-order="stroke" textLength="155">jingyan.baidu.com</text>
      ${pin(65, 315, "1", "73,313 118.300,268.500 116,264 134,260 126.700,277.300 124,273.500")}
      ${pin(73, 538, "2", "81,533 126.700,512.300 126,506.700 145,509.500 132.300,522.300 131,517.500")}
      ${pin(444, 549, "3", "435,547 360,529 360.700,524.300 342.700,529 357.700,539.300 358.300,535.500")}
    </svg>`;
  }

  render() {
    return html`<div class="win">${this.title()}
        <div class="mid">
          <div class="tabs">${TABS.map(([t, w, k]) => html`<div class=${`tab ${k}`} style=${styleMap({ width: `${w}px` })}>${t}</div>`)}
            <svg class="help" width="14" height="14" viewBox="0 0 14 14"><circle cx="7" cy="7" r="6.500" fill="#2e69d3" stroke="#6688bd"/><circle cx="7" cy="7" r="5.400" fill="none" stroke="#dfe9fb"/><text x="7" y="11" font-size="10.500" font-weight="700" text-anchor="middle" fill="#fff">?</text></svg>
          </div>
          <ribbon-bar></ribbon-bar>
          ${this.qat()}${this.document()}${this.status()}
        </div></div>
      ${this.orb()}<cell-menu></cell-menu><align-grid></align-grid>${this.overlay()}`;
  }
}
